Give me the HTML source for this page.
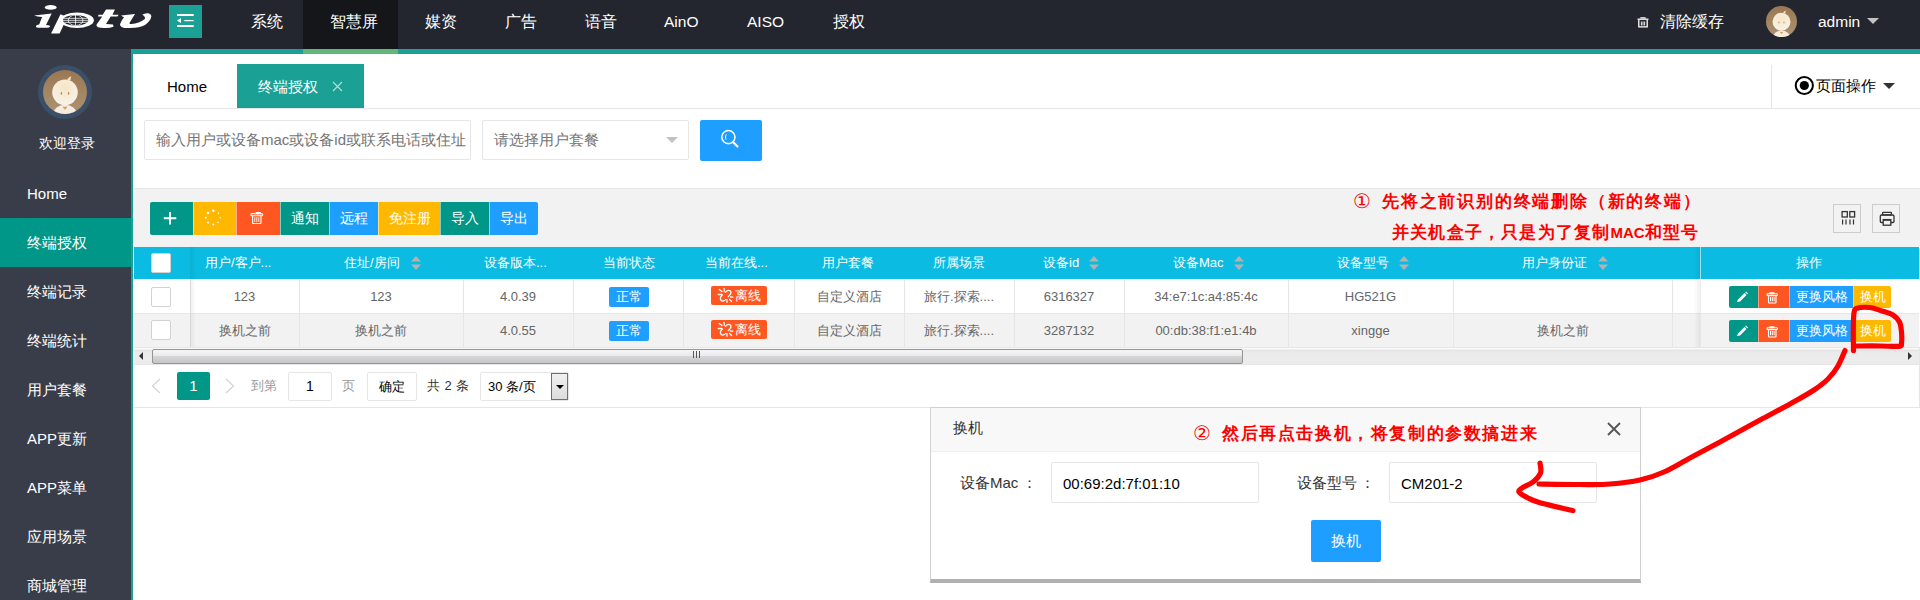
<!DOCTYPE html>
<html><head><meta charset="utf-8">
<style>
*{box-sizing:border-box;margin:0;padding:0}
html,body{width:1920px;height:600px;overflow:hidden;background:#fff;font-family:"Liberation Sans",sans-serif;color:#333}
.a{position:absolute}
#hdr{left:0;top:0;width:1920px;height:49px;background:#23262E}
#strip{left:131px;top:49px;width:1789px;height:5px;background:#1AA094}
.nav{top:0;height:49px;line-height:44px;color:#fff;font-size:15.5px;white-space:nowrap}
#side{left:0;top:49px;width:131px;height:551px;background:#393D49}
#sideb{left:131px;top:49px;width:2px;height:551px;background:#1AA094}
.mi{left:0;width:131px;height:49px;color:#fff;font-size:15px;line-height:49px;padding-left:27px;white-space:nowrap}
.th{color:#fff;font-size:13px;white-space:nowrap}
.td{color:#666;font-size:13px;white-space:nowrap;text-align:center}
.sort{width:10px;height:16px}
.vb{background:#e6e6e6;width:1px}
.ann{color:#f00;font-size:17px;font-weight:700;line-height:24px;white-space:nowrap}
</style></head><body>
<!-- header -->
<div id="hdr" class="a"></div>
<div class="a" style="left:303px;top:0;width:95px;height:49px;background:#141619"></div>
<div id="strip" class="a"></div>
<div class="a" style="left:303px;top:49px;width:95px;height:5px;background:#5FB878"></div>
<!-- logo -->
<svg class="a" style="left:0;top:0" width="165" height="40" viewBox="0 0 165 40">
<defs><clipPath id="gl"><ellipse cx="75.6" cy="20.25" rx="12.6" ry="5.25"/></clipPath></defs>
<g fill="#fff">
<ellipse cx="50.7" cy="7.4" rx="5.9" ry="2.4"/>
<path d="M34.1 15.6 L51.7 13.6 L46 24.9 Q50.5 25 50 26.6 Q49.5 27.8 47 27.8 L38 27.8 Q35.5 27.6 35.9 26 Q36.5 24.6 39.2 24.4 L42.1 17 Q37 16.8 34.1 15.6 Z"/>
<path d="M60.5 14.2 L51.1 33.4 L59.6 33.4 L64.5 23 L64.5 16 Z"/>
<ellipse cx="77.05" cy="20.3" rx="16.85" ry="7.8"/>
<path d="M106 9.4 L114.9 9.4 L112.5 14.8 L118.6 14.8 L117.4 16.4 L110.7 16.4 L106 24.1 L113 24.6 L113.5 26.7 Q110 27.9 106 27.9 Q100 27.9 98 27.2 Q96 26.2 96.6 24.5 L102.3 16.4 L98.1 16.4 L98.5 14.8 L102.7 14.8 Z"/>
<path d="M121 15.5 L135 13.9 L129.3 23.2 Q130 24.2 131.5 24.1 Q139 23.6 144.8 19 Q146 17 142.2 14.8 Q145 12.8 148 13.2 Q151.5 14 151.3 16.5 Q150.5 21 145 25 Q140 27.9 130 27.9 L124.7 27.9 Q120.2 27.5 120 24.6 Q120.5 22 124 17.2 Q122.5 16.5 121 15.5 Z"/>
</g>
<ellipse cx="75.6" cy="20.25" rx="12.6" ry="5.25" fill="#23262E"/>
<g clip-path="url(#gl)" fill="none" stroke="#fff" stroke-width="0.8">
<ellipse cx="75.6" cy="20.25" rx="7.4" ry="5.25"/>
<line x1="75.5" y1="14" x2="75.5" y2="26"/>
<line x1="62" y1="18.3" x2="89" y2="18.3"/>
<line x1="62" y1="20.3" x2="89" y2="20.3"/>
<line x1="62" y1="22.3" x2="89" y2="22.3"/>
</g>
</svg>
<!-- toggle -->
<div class="a" style="left:169px;top:5px;width:33px;height:33px;background:#1AA094"></div>
<svg class="a" style="left:169px;top:5px" width="33" height="33">
<g fill="#fff"><rect x="8" y="9" width="16.7" height="2"/><rect x="15.3" y="15" width="9.4" height="1.2"/><rect x="8" y="20" width="16.7" height="2"/><path d="M8 15.5 L12 13 L12 18 Z"/></g>
</svg>
<!-- nav -->
<div class="a nav" style="left:251px">系统</div>
<div class="a nav" style="left:330px">智慧屏</div>
<div class="a nav" style="left:425px">媒资</div>
<div class="a nav" style="left:505px">广告</div>
<div class="a nav" style="left:585px">语音</div>
<div class="a nav" style="left:664px">AinO</div>
<div class="a nav" style="left:747px">AISO</div>
<div class="a nav" style="left:833px">授权</div>
<!-- header right -->
<svg class="a" style="left:1636px;top:16px" width="14" height="12" viewBox="0 0 14 12">
<g fill="none" stroke="#fff" stroke-width="1.3"><path d="M1.5 3.2 H12.5"/><path d="M5 2.5 V1.8 H9 V2.5"/><path d="M2.8 4 V10.8 H11.2 V4"/></g>
<g stroke="#fff" stroke-width=".9"><path d="M5.4 5.5 V9.5 M7 5.5 V9.5 M8.6 5.5 V9.5"/></g>
</svg>
<div class="a nav" style="left:1660px">清除缓存</div>
<div class="a" id="av1" style="left:1766px;top:6px;width:31px;height:31px"><svg width="100%" height="100%" viewBox="0 0 62 62"><defs>
<linearGradient id="bgG1" x1="0" y1="0" x2="0" y2="1"><stop offset="0" stop-color="#9a7752"/><stop offset="1" stop-color="#ad9373"/></linearGradient>
<radialGradient id="fG1" cx=".5" cy=".3" r=".7"><stop offset="0" stop-color="#f6e6c6"/><stop offset="1" stop-color="#f8f2ea"/></radialGradient>
<clipPath id="cc1"><circle cx="31" cy="31" r="31"/></clipPath></defs>
<g clip-path="url(#cc1)"><rect width="62" height="62" fill="url(#bgG1)"/>
<path d="M14 62 Q16 50 31 49 Q46 50 48 62 Z" fill="#f5ecdf"/>
<circle cx="31" cy="31.5" r="18" fill="url(#fG1)"/>
<path d="M34 14 Q36 9 40 9 Q38 12 39 14 Q36 16 34 14 Z" fill="#f3e3c3"/>
<ellipse cx="26" cy="33" rx="1" ry="2" fill="#b08a55"/><ellipse cx="36" cy="33" rx="1" ry="2" fill="#b08a55"/>
<path d="M31 56 L28 53 Q28 51 30 51.5 L31 52.5 L32 51.5 Q34 51 34 53 Z" fill="#d9a15a"/>
</g></svg></div>
<div class="a nav" style="left:1818px">admin</div>
<div class="a" style="left:1867px;top:18px;width:0;height:0;border-left:6px solid transparent;border-right:6px solid transparent;border-top:6px solid #c2c2c2"></div>

<!-- sidebar -->
<div id="side" class="a"></div>
<div id="sideb" class="a"></div>
<div class="a" id="av2" style="left:38px;top:65px;width:54px;height:54px;border-radius:50%;background:#3B5068;padding:5px"><svg width="100%" height="100%" viewBox="0 0 62 62"><defs>
<linearGradient id="bgG2" x1="0" y1="0" x2="0" y2="1"><stop offset="0" stop-color="#9a7752"/><stop offset="1" stop-color="#ad9373"/></linearGradient>
<radialGradient id="fG2" cx=".5" cy=".3" r=".7"><stop offset="0" stop-color="#f6e6c6"/><stop offset="1" stop-color="#f8f2ea"/></radialGradient>
<clipPath id="cc2"><circle cx="31" cy="31" r="31"/></clipPath></defs>
<g clip-path="url(#cc2)"><rect width="62" height="62" fill="url(#bgG2)"/>
<path d="M14 62 Q16 50 31 49 Q46 50 48 62 Z" fill="#f5ecdf"/>
<circle cx="31" cy="31.5" r="18" fill="url(#fG2)"/>
<path d="M34 14 Q36 9 40 9 Q38 12 39 14 Q36 16 34 14 Z" fill="#f3e3c3"/>
<ellipse cx="26" cy="33" rx="1" ry="2" fill="#b08a55"/><ellipse cx="36" cy="33" rx="1" ry="2" fill="#b08a55"/>
<path d="M31 56 L28 53 Q28 51 30 51.5 L31 52.5 L32 51.5 Q34 51 34 53 Z" fill="#d9a15a"/>
</g></svg></div>
<div class="a" style="left:39px;top:133px;color:#fff;font-size:14px;line-height:20px">欢迎登录</div>
<div class="a mi" style="top:169px">Home</div>
<div class="a mi" style="top:218px;background:#009688">终端授权</div>
<div class="a mi" style="top:267px">终端记录</div>
<div class="a mi" style="top:316px">终端统计</div>
<div class="a mi" style="top:365px">用户套餐</div>
<div class="a mi" style="top:414px">APP更新</div>
<div class="a mi" style="top:463px">APP菜单</div>
<div class="a mi" style="top:512px">应用场景</div>
<div class="a mi" style="top:561px">商城管理</div>

<!-- tabs -->
<div class="a" style="left:133px;top:108px;width:1787px;height:1px;background:#e6e6e6"></div>
<div class="a" style="left:167px;top:75px;font-size:15px;color:#000;line-height:24px">Home</div>
<div class="a" style="left:237px;top:64px;width:127px;height:44px;background:#1AA094"></div>
<div class="a" style="left:258px;top:75px;font-size:15px;color:#fff;line-height:24px">终端授权</div>
<svg class="a" style="left:332px;top:81px" width="11" height="11"><path d="M1 1 L10 10 M10 1 L1 10" stroke="#b9dcd8" stroke-width="1.1"/></svg>
<div class="a" style="left:1771px;top:65px;width:1px;height:43px;background:#e6e6e6"></div>
<svg class="a" style="left:1794px;top:75px" width="21" height="21"><circle cx="10.3" cy="10.5" r="8.6" fill="none" stroke="#000" stroke-width="2"/><circle cx="10.3" cy="10.5" r="4.6" fill="#000"/></svg>
<div class="a" style="left:1816px;top:74px;font-size:15px;color:#000;line-height:24px">页面操作</div>
<div class="a" style="left:1883px;top:83px;width:0;height:0;border-left:6px solid transparent;border-right:6px solid transparent;border-top:6px solid #333"></div>

<!-- search -->
<div class="a" style="left:144px;top:120px;width:327px;height:40px;border:1px solid #e6e6e6;border-radius:2px;overflow:hidden">
<div style="padding-left:11px;line-height:38px;font-size:15px;color:#757575;white-space:nowrap">输入用户或设备mac或设备id或联系电话或住址</div></div>
<div class="a" style="left:482px;top:120px;width:207px;height:40px;border:1px solid #e6e6e6;border-radius:2px">
<div style="padding-left:11px;line-height:38px;font-size:15px;color:#757575;white-space:nowrap">请选择用户套餐</div></div>
<div class="a" style="left:666px;top:137px;width:0;height:0;border-left:6px solid transparent;border-right:6px solid transparent;border-top:6px solid #c2c2c2"></div>
<div class="a" style="left:700px;top:120px;width:62px;height:41px;background:#1E9FFF;border-radius:2px"></div>
<svg class="a" style="left:720px;top:128px" width="22" height="22"><circle cx="8.4" cy="9.1" r="6.6" fill="none" stroke="#fff" stroke-width="1.5"/><path d="M13 14 L17.5 18.5" stroke="#fff" stroke-width="2.2" stroke-linecap="round"/><path d="M6.2 6.5 Q4.6 9 6 11.6" stroke="#fff" stroke-width="1" fill="none"/></svg>

<!-- gray area -->
<div class="a" style="left:133px;top:189px;width:1787px;height:58px;background:#f2f2f2"></div>
<div class="a" style="left:133px;top:188px;width:1787px;height:1px;background:#e6e6e6"></div>

<!-- toolbar -->
<div class="a" style="left:150px;top:202px;width:388px;height:33px;border-radius:2px;overflow:hidden;font-size:14px;color:#fff;white-space:nowrap">
<div class="a" style="left:0;top:0;width:43px;height:33px;background:#009688"></div>
<div class="a" style="left:43px;top:0;width:43px;height:33px;background:#FFB800;border-left:1px solid rgba(255,255,255,.5)"></div>
<div class="a" style="left:86px;top:0;width:44px;height:33px;background:#FF5722;border-left:1px solid rgba(255,255,255,.5)"></div>
<div class="a" style="left:130px;top:0;width:49px;height:33px;background:#009688;border-left:1px solid rgba(255,255,255,.5);text-align:center;line-height:33px">通知</div>
<div class="a" style="left:179px;top:0;width:49px;height:33px;background:#1E9FFF;border-left:1px solid rgba(255,255,255,.5);text-align:center;line-height:33px">远程</div>
<div class="a" style="left:228px;top:0;width:62px;height:33px;background:#FFB800;border-left:1px solid rgba(255,255,255,.5);text-align:center;line-height:33px">免注册</div>
<div class="a" style="left:290px;top:0;width:49px;height:33px;background:#009688;border-left:1px solid rgba(255,255,255,.5);text-align:center;line-height:33px">导入</div>
<div class="a" style="left:339px;top:0;width:49px;height:33px;background:#1E9FFF;border-left:1px solid rgba(255,255,255,.5);text-align:center;line-height:33px">导出</div>
</div>
<svg class="a" style="left:150px;top:202px" width="140" height="33">
<path d="M20 10 V22.5 M13.8 16.2 H26.3" stroke="#fff" stroke-width="2"/>
<g fill="#fff"><circle cx="63.4" cy="8.8" r="1.3"/><circle cx="58" cy="11" r="1.2"/><circle cx="68.5" cy="11.3" r=".7"/><circle cx="55.8" cy="15.8" r="1.1"/><circle cx="70.3" cy="15.8" r=".7"/><circle cx="58" cy="20.5" r="1"/><circle cx="68" cy="20.5" r=".8"/><circle cx="63.3" cy="22.5" r="1"/></g>
<g transform="translate(5 0)"><g fill="none" stroke="#fff" stroke-width="1.1"><rect x="101.2" y="10.6" width="4.4" height="1" rx=".5"/><rect x="95.9" y="11.6" width="11.8" height="2.1" rx="1"/><path d="M97.6 13.8 V20.9 Q97.6 21.5 98.2 21.5 H105.4 Q106 21.5 106 20.9 V13.8"/></g>
<g stroke="#fff" stroke-width=".9"><path d="M99.8 15.3 V20 M101.8 15.3 V20 M103.8 15.3 V20"/></g></g>
</svg>

<!-- annotations 1 -->
<div class="a ann" style="left:1353px;top:189px;font-size:20px;font-weight:400">①</div><div class="a ann" style="left:1382px;top:190px;letter-spacing:1.8px">先将之前识别的终端删除（新的终端）</div>
<div class="a ann" style="left:1392px;top:221px;letter-spacing:1.2px">并关机盒子，只是为了复制<span style="letter-spacing:0;font-size:15px">MAC</span>和型号</div>

<!-- right icons -->
<div class="a" style="left:1833px;top:204px;width:28px;height:29px;border:1px solid #ccc"></div>
<div class="a" style="left:1872px;top:204px;width:28px;height:29px;border:1px solid #ccc"></div>
<svg class="a" style="left:1833px;top:204px" width="28" height="29"><g fill="none" stroke="#333" stroke-width="1.3"><rect x="9.1" y="7.6" width="5.2" height="5.4"/><rect x="16.8" y="7.6" width="4.8" height="5.4"/></g><g stroke="#333" stroke-width="1.2"><path d="M9.6 15.4 V20.6 M13 15.4 V20.6 M17 15.4 V20.6 M20.5 15.4 V20.6"/></g></svg>
<svg class="a" style="left:1872px;top:204px" width="28" height="29"><g fill="none" stroke="#333" stroke-width="1.3"><rect x="10.6" y="8.3" width="8.8" height="2.6" rx=".5"/><path d="M11 18.5 H9.5 Q8.3 18.5 8.3 17.3 V12.2 Q8.3 11 9.5 11 H20.8 Q22 11 22 12.2 V17.3 Q22 18.5 20.8 18.5 H19"/><rect x="11.2" y="15.6" width="7.6" height="5.6" fill="#f2f2f2"/></g><path d="M11.2 16 H18.8" stroke="#333" stroke-width="1.6"/></svg>

<!-- table -->
<div class="a" style="left:134px;top:247px;width:1785px;height:32px;background:#0BBBE1"></div>
<div class="a" style="left:134px;top:279px;width:1785px;height:34px;background:#fff"></div>
<div class="a" style="left:134px;top:314px;width:1785px;height:33px;background:#f2f2f2"></div>
<div class="a" style="left:134px;top:313px;width:1785px;height:1px;background:#e6e6e6"></div>
<div class="a" style="left:134px;top:347px;width:1785px;height:1px;background:#e6e6e6"></div>
<!-- column borders -->
<div class="a vb" style="left:190px;top:280px;height:67px"></div>
<div class="a vb" style="left:299px;top:280px;height:67px"></div>
<div class="a vb" style="left:463px;top:280px;height:67px"></div>
<div class="a vb" style="left:573px;top:280px;height:67px"></div>
<div class="a vb" style="left:683px;top:280px;height:67px"></div>
<div class="a vb" style="left:794px;top:280px;height:67px"></div>
<div class="a vb" style="left:904px;top:280px;height:67px"></div>
<div class="a vb" style="left:1014px;top:280px;height:67px"></div>
<div class="a vb" style="left:1124px;top:280px;height:67px"></div>
<div class="a vb" style="left:1288px;top:280px;height:67px"></div>
<div class="a vb" style="left:1453px;top:280px;height:67px"></div>
<div class="a vb" style="left:1672px;top:280px;height:67px"></div>
<!-- left fixed shadow -->
<div class="a" style="left:190px;top:247px;width:6px;height:100px;background:linear-gradient(90deg,rgba(0,0,0,.06),rgba(0,0,0,0))"></div>
<!-- checkboxes -->
<div class="a" style="left:151px;top:253px;width:20px;height:20px;background:#fff;border:1px solid #d2d2d2;border-radius:2px"></div>
<div class="a" style="left:151px;top:287px;width:20px;height:20px;background:#fff;border:1px solid #d2d2d2;border-radius:2px"></div>
<div class="a" style="left:151px;top:320px;width:20px;height:20px;background:#fff;border:1px solid #d2d2d2;border-radius:2px"></div>

<!-- header texts -->
<div class="a th" style="left:205px;top:254px;line-height:18px">用户/客户...</div>
<div class="a th" style="left:344px;top:254px;line-height:18px">住址/房间</div>
<div class="a th" style="left:484px;top:254px;line-height:18px">设备版本...</div>
<div class="a th" style="left:603px;top:254px;line-height:18px">当前状态</div>
<div class="a th" style="left:705px;top:254px;line-height:18px">当前在线...</div>
<div class="a th" style="left:822px;top:254px;line-height:18px">用户套餐</div>
<div class="a th" style="left:933px;top:254px;line-height:18px">所属场景</div>
<div class="a th" style="left:1043px;top:254px;line-height:18px">设备id</div>
<div class="a th" style="left:1173px;top:254px;line-height:18px">设备Mac</div>
<div class="a th" style="left:1337px;top:254px;line-height:18px">设备型号</div>
<div class="a th" style="left:1522px;top:254px;line-height:18px">用户身份证</div>
<svg class="a sort" style="left:411px;top:255px"><path d="M0 6.5 L5 1 L10 6.5 Z M0 9.5 L5 15 L10 9.5 Z" fill="#b2b2b2"/></svg>
<svg class="a sort" style="left:1089px;top:255px"><path d="M0 6.5 L5 1 L10 6.5 Z M0 9.5 L5 15 L10 9.5 Z" fill="#b2b2b2"/></svg>
<svg class="a sort" style="left:1234px;top:255px"><path d="M0 6.5 L5 1 L10 6.5 Z M0 9.5 L5 15 L10 9.5 Z" fill="#b2b2b2"/></svg>
<svg class="a sort" style="left:1399px;top:255px"><path d="M0 6.5 L5 1 L10 6.5 Z M0 9.5 L5 15 L10 9.5 Z" fill="#b2b2b2"/></svg>
<svg class="a sort" style="left:1598px;top:255px"><path d="M0 6.5 L5 1 L10 6.5 Z M0 9.5 L5 15 L10 9.5 Z" fill="#b2b2b2"/></svg>

<!-- row texts -->
<div class="a td" style="left:190px;top:288px;width:109px;line-height:18px">123</div>
<div class="a td" style="left:299px;top:288px;width:164px;line-height:18px">123</div>
<div class="a td" style="left:463px;top:288px;width:110px;line-height:18px">4.0.39</div>
<div class="a td" style="left:794px;top:288px;width:110px;line-height:18px">自定义酒店</div>
<div class="a td" style="left:904px;top:288px;width:110px;line-height:18px">旅行.探索....</div>
<div class="a td" style="left:1014px;top:288px;width:110px;line-height:18px">6316327</div>
<div class="a td" style="left:1124px;top:288px;width:164px;line-height:18px">34:e7:1c:a4:85:4c</div>
<div class="a td" style="left:1288px;top:288px;width:165px;line-height:18px">HG521G</div>

<div class="a td" style="left:190px;top:322px;width:109px;line-height:18px">换机之前</div>
<div class="a td" style="left:299px;top:322px;width:164px;line-height:18px">换机之前</div>
<div class="a td" style="left:463px;top:322px;width:110px;line-height:18px">4.0.55</div>
<div class="a td" style="left:794px;top:322px;width:110px;line-height:18px">自定义酒店</div>
<div class="a td" style="left:904px;top:322px;width:110px;line-height:18px">旅行.探索....</div>
<div class="a td" style="left:1014px;top:322px;width:110px;line-height:18px">3287132</div>
<div class="a td" style="left:1124px;top:322px;width:164px;line-height:18px">00:db:38:f1:e1:4b</div>
<div class="a td" style="left:1288px;top:322px;width:165px;line-height:18px">xingge</div>
<div class="a td" style="left:1453px;top:322px;width:219px;line-height:18px">换机之前</div>

<!-- badges -->
<div class="a" style="left:609px;top:287px;width:40px;height:20px;background:#1E9FFF;border-radius:2px;color:#fff;font-size:13px;text-align:center;line-height:20px">正常</div>
<div class="a" style="left:609px;top:321px;width:40px;height:20px;background:#1E9FFF;border-radius:2px;color:#fff;font-size:13px;text-align:center;line-height:20px">正常</div>
<div class="a" style="left:711px;top:286px;width:56px;height:19px;background:#FF5722;border-radius:2px;color:#fff;font-size:13px;line-height:19px;padding-left:24px"><svg class="a" style="left:0;top:0" width="24" height="19"><g fill="none" stroke="#fff" stroke-width="1.3" stroke-linecap="round">
<path d="M8.2 3.5 L11 5.6 M13 2.4 L13.3 5.2 M7.3 8.5 L10.6 8.5 M16 13.6 L16 16.3 M18.6 13.5 L20.6 15.5 M19.6 11 L21.8 11.2"/>
<path d="M14.4 6.4 Q16 4.3 17.8 4.4 Q20.6 4.8 19.8 7.6 Q19.2 9 17.3 10.5"/>
<path d="M11.4 8.9 Q9 11 9.4 13 Q10 15.3 12.4 15 Q13.8 14.6 15 13.4"/>
</g></svg>离线</div>
<div class="a" style="left:711px;top:320px;width:56px;height:19px;background:#FF5722;border-radius:2px;color:#fff;font-size:13px;line-height:19px;padding-left:24px"><svg class="a" style="left:0;top:0" width="24" height="19"><g fill="none" stroke="#fff" stroke-width="1.3" stroke-linecap="round">
<path d="M8.2 3.5 L11 5.6 M13 2.4 L13.3 5.2 M7.3 8.5 L10.6 8.5 M16 13.6 L16 16.3 M18.6 13.5 L20.6 15.5 M19.6 11 L21.8 11.2"/>
<path d="M14.4 6.4 Q16 4.3 17.8 4.4 Q20.6 4.8 19.8 7.6 Q19.2 9 17.3 10.5"/>
<path d="M11.4 8.9 Q9 11 9.4 13 Q10 15.3 12.4 15 Q13.8 14.6 15 13.4"/>
</g></svg>离线</div>

<!-- right fixed col -->
<div class="a" style="left:1694px;top:247px;width:6px;height:100px;background:linear-gradient(270deg,rgba(0,0,0,.06),rgba(0,0,0,0))"></div>
<div class="a" style="left:1700px;top:247px;width:219px;height:32px;background:#0BBBE1;border-left:1px solid #9ee0ef"></div>
<div class="a th" style="left:1796px;top:254px;line-height:18px">操作</div>
<div class="a" style="left:1700px;top:279px;width:219px;height:34px;background:#fff;border-left:1px solid #eee"></div>
<div class="a" style="left:1700px;top:314px;width:219px;height:33px;background:#f2f2f2;border-left:1px solid #e6e6e6"></div>
<div class="a" style="left:1700px;top:313px;width:219px;height:1px;background:#e6e6e6"></div>
<div class="a" style="left:1700px;top:347px;width:219px;height:1px;background:#e6e6e6"></div>

<!-- op buttons -->
<div class="a" style="left:1729px;top:286px;width:162px;height:22px;border-radius:2px;overflow:hidden;color:#fff;font-size:13px;white-space:nowrap">
<div class="a" style="left:0;top:0;width:29px;height:22px;background:#009688"></div>
<div class="a" style="left:29px;top:0;width:31px;height:22px;background:#FF5722;border-left:1px solid rgba(255,255,255,.4)"></div>
<div class="a" style="left:60px;top:0;width:64px;height:22px;background:#1E9FFF;border-left:1px solid rgba(255,255,255,.4);text-align:center;line-height:22px">更换风格</div>
<div class="a" style="left:124px;top:0;width:38px;height:22px;background:#FFB800;border-left:1px solid rgba(255,255,255,.4);text-align:center;line-height:22px">换机</div>
<svg class="a" style="left:0;top:0" width="60" height="22">
<path d="M8 16 L9 13.5 L15.5 7 L17.5 9 L11 15.5 Z" fill="#fff"/><path d="M16.2 6.3 L17 5.5 L19 7.5 L18.2 8.3 Z" fill="#fff"/>
<g fill="none" stroke="#fff" stroke-width="1.1"><rect x="40.6" y="6.7" width="4.6" height="1" rx=".5"/><rect x="38" y="7.8" width="10.4" height="1.8" rx=".9"/><path d="M39.5 9.8 V16.4 Q39.5 17 40.1 17 H46.4 Q47 17 47 16.4 V9.8"/></g>
<g stroke="#fff" stroke-width="1"><path d="M41.5 11 V15.2 M43.3 11 V15.2 M45.1 11 V15.2"/></g>
</svg></div>
<div class="a" style="left:1729px;top:320px;width:162px;height:22px;border-radius:2px;overflow:hidden;color:#fff;font-size:13px;white-space:nowrap">
<div class="a" style="left:0;top:0;width:29px;height:22px;background:#009688"></div>
<div class="a" style="left:29px;top:0;width:31px;height:22px;background:#FF5722;border-left:1px solid rgba(255,255,255,.4)"></div>
<div class="a" style="left:60px;top:0;width:64px;height:22px;background:#1E9FFF;border-left:1px solid rgba(255,255,255,.4);text-align:center;line-height:22px">更换风格</div>
<div class="a" style="left:124px;top:0;width:38px;height:22px;background:#FFB800;border-left:1px solid rgba(255,255,255,.4);text-align:center;line-height:22px">换机</div>
<svg class="a" style="left:0;top:0" width="60" height="22">
<path d="M8 16 L9 13.5 L15.5 7 L17.5 9 L11 15.5 Z" fill="#fff"/><path d="M16.2 6.3 L17 5.5 L19 7.5 L18.2 8.3 Z" fill="#fff"/>
<g fill="none" stroke="#fff" stroke-width="1.1"><rect x="40.6" y="6.7" width="4.6" height="1" rx=".5"/><rect x="38" y="7.8" width="10.4" height="1.8" rx=".9"/><path d="M39.5 9.8 V16.4 Q39.5 17 40.1 17 H46.4 Q47 17 47 16.4 V9.8"/></g>
<g stroke="#fff" stroke-width="1"><path d="M41.5 11 V15.2 M43.3 11 V15.2 M45.1 11 V15.2"/></g>
</svg></div>

<!-- scrollbar -->
<div class="a" style="left:134px;top:348px;width:1785px;height:16px;background:linear-gradient(#fafafa 0,#fafafa 1px,#e4e4e4 2px,#ececec 5px,#ececec 100%)"></div>
<div class="a" style="left:152px;top:349px;width:1091px;height:15px;border:1px solid #959595;border-radius:2px;background:linear-gradient(#f6f6f6 0,#e9e9e9 45%,#d6d6d6 50%,#c5c5c9 100%)"></div>
<div class="a" style="left:139px;top:352px;width:0;height:0;border-top:4px solid transparent;border-bottom:4px solid transparent;border-right:4px solid #333"></div>
<div class="a" style="left:1908px;top:352px;width:0;height:0;border-top:4px solid transparent;border-bottom:4px solid transparent;border-left:4px solid #333"></div>
<svg class="a" style="left:692px;top:351px" width="10" height="8"><path d="M1.5 0 V7 M4.5 0 V7 M7.5 0 V7" stroke="#555" stroke-width="1"/></svg>

<!-- pagination -->
<svg class="a" style="left:150px;top:378px" width="12" height="16"><path d="M10 1 L2.5 8 L10 15" fill="none" stroke="#d2d2d2" stroke-width="1.2"/></svg>
<div class="a" style="left:177px;top:372px;width:33px;height:28px;background:#009688;border-radius:2px;color:#fff;font-size:15px;text-align:center;line-height:28px">1</div>
<svg class="a" style="left:224px;top:378px" width="12" height="16"><path d="M2 1 L9.5 8 L2 15" fill="none" stroke="#d2d2d2" stroke-width="1.2"/></svg>
<div class="a" style="left:251px;top:376px;font-size:13px;color:#999;line-height:20px">到第</div>
<div class="a" style="left:288px;top:372px;width:44px;height:29px;border:1px solid #e6e6e6;border-radius:2px;text-align:center;line-height:27px;font-size:14px;color:#000">1</div>
<div class="a" style="left:342px;top:376px;font-size:13px;color:#999;line-height:20px">页</div>
<div class="a" style="left:367px;top:372px;width:50px;height:29px;border:1px solid #e6e6e6;border-radius:2px;text-align:center;line-height:27px;font-size:13px;color:#000">确定</div>
<div class="a" style="left:427px;top:376px;font-size:13px;color:#333;line-height:20px;word-spacing:1px">共 2 条</div>
<div class="a" style="left:480px;top:372px;width:89px;height:29px;border:1px solid #e6e6e6;border-radius:2px;font-size:13px;color:#000;line-height:27px;padding-left:7px">30 条/页</div>
<div class="a" style="left:551px;top:373px;width:17px;height:27px;border:1px solid #707070;background:linear-gradient(#f0f0f0,#dcdcdc)"></div>
<div class="a" style="left:556px;top:385px;width:0;height:0;border-left:4px solid transparent;border-right:4px solid transparent;border-top:4px solid #000"></div>
<div class="a" style="left:133px;top:407px;width:1787px;height:1px;background:#e6e6e6"></div>
<div class="a" style="left:1919px;top:347px;width:1px;height:61px;background:#e6e6e6"></div>
<div class="a" style="left:133px;top:364px;width:1787px;height:1px;background:#e6e6e6"></div>

<!-- modal -->
<div class="a" style="left:930px;top:407px;width:711px;height:176px;background:#fff;border:1px solid #d0d0d0;border-bottom:4px solid #b0b0b0"></div>
<div class="a" style="left:931px;top:408px;width:709px;height:44px;background:#f8f8f8;border-bottom:1px solid #eee"></div>
<div class="a" style="left:953px;top:418px;font-size:15px;color:#333;line-height:20px">换机</div>
<svg class="a" style="left:1606px;top:421px" width="16" height="16"><path d="M2 2 L14 14 M14 2 L2 14" stroke="#555" stroke-width="1.8"/></svg>
<div class="a" style="left:960px;top:473px;font-size:15px;color:#333;line-height:20px">设备Mac<span style="letter-spacing:-1px">&nbsp;</span>：</div>
<div class="a" style="left:1051px;top:462px;width:208px;height:41px;border:1px solid #e6e6e6;border-radius:2px;font-size:15px;color:#000;line-height:41px;padding-left:11px">00:69:2d:7f:01:10</div>
<div class="a" style="left:1297px;top:473px;font-size:15px;color:#333;line-height:20px">设备型号<span style="letter-spacing:-1px">&nbsp;</span>：</div>
<div class="a" style="left:1389px;top:462px;width:208px;height:41px;border:1px solid #e6e6e6;border-radius:2px;font-size:15px;color:#000;line-height:41px;padding-left:11px">CM201-2</div>
<div class="a" style="left:1311px;top:520px;width:70px;height:42px;background:#1E9FFF;border-radius:2px;color:#fff;font-size:15px;text-align:center;line-height:42px">换机</div>
<div class="a ann" style="left:1193px;top:421px;font-size:20px;font-weight:400">②</div><div class="a ann" style="left:1222px;top:422px;letter-spacing:1.6px">然后再点击换机，将复制的参数搞进来</div>
<!-- red drawing -->
<svg class="a" style="left:0;top:0" width="1920" height="600"><g fill="none" stroke="#f00" stroke-width="5.2" stroke-linecap="round" stroke-linejoin="round">
<path d="M1845.0 350.5 C1843.8 353.1 1840.8 361.2 1838.0 366.0 C1835.2 370.8 1832.0 375.0 1828.0 379.0 C1824.0 383.0 1820.3 385.8 1814.0 390.0 C1807.7 394.2 1799.0 399.0 1790.0 404.0 C1781.0 409.0 1771.7 413.7 1760.0 420.0 C1748.3 426.3 1731.7 435.7 1720.0 442.0 C1708.3 448.3 1699.3 453.0 1690.0 458.0 C1680.7 463.0 1672.3 468.3 1664.0 472.0 C1655.7 475.7 1649.0 478.0 1640.0 480.0 C1631.0 482.0 1620.0 483.2 1610.0 484.0 C1600.0 484.8 1591.8 484.5 1580.0 484.5 C1568.2 484.5 1545.8 484.1 1539.0 484.0"/>
<path d="M1853.5 350.5 C1853.5 347.1 1853.2 336.2 1853.3 330.0 C1853.4 323.8 1853.4 316.6 1854.0 313.0 C1854.6 309.4 1854.3 309.2 1857.0 308.3 C1859.7 307.4 1865.8 307.1 1870.0 307.5 C1874.2 307.9 1878.2 309.8 1882.0 311.0 C1885.8 312.2 1890.1 313.2 1893.0 315.0 C1895.9 316.8 1898.1 319.2 1899.5 322.0 C1900.9 324.8 1901.2 328.5 1901.5 332.0 C1901.8 335.5 1901.9 340.6 1901.5 343.0 C1901.1 345.4 1902.6 345.8 1899.0 346.3 C1895.4 346.8 1887.2 346.1 1880.0 346.0 C1872.8 345.9 1860.0 346.0 1856.0 346.0"/>
<path d="M1540.0 463.0 C1540.1 464.7 1541.7 469.8 1540.5 473.0 C1539.3 476.2 1536.1 479.5 1533.0 482.0 C1529.9 484.5 1524.3 486.3 1522.0 488.0 C1519.7 489.7 1518.0 490.3 1519.0 492.0 C1520.0 493.7 1524.5 496.2 1528.0 498.0 C1531.5 499.8 1532.5 500.6 1540.0 502.7 C1547.5 504.8 1567.5 509.4 1573.0 510.7"/>
</g></svg>

<!-- avatars -->
</body></html>
